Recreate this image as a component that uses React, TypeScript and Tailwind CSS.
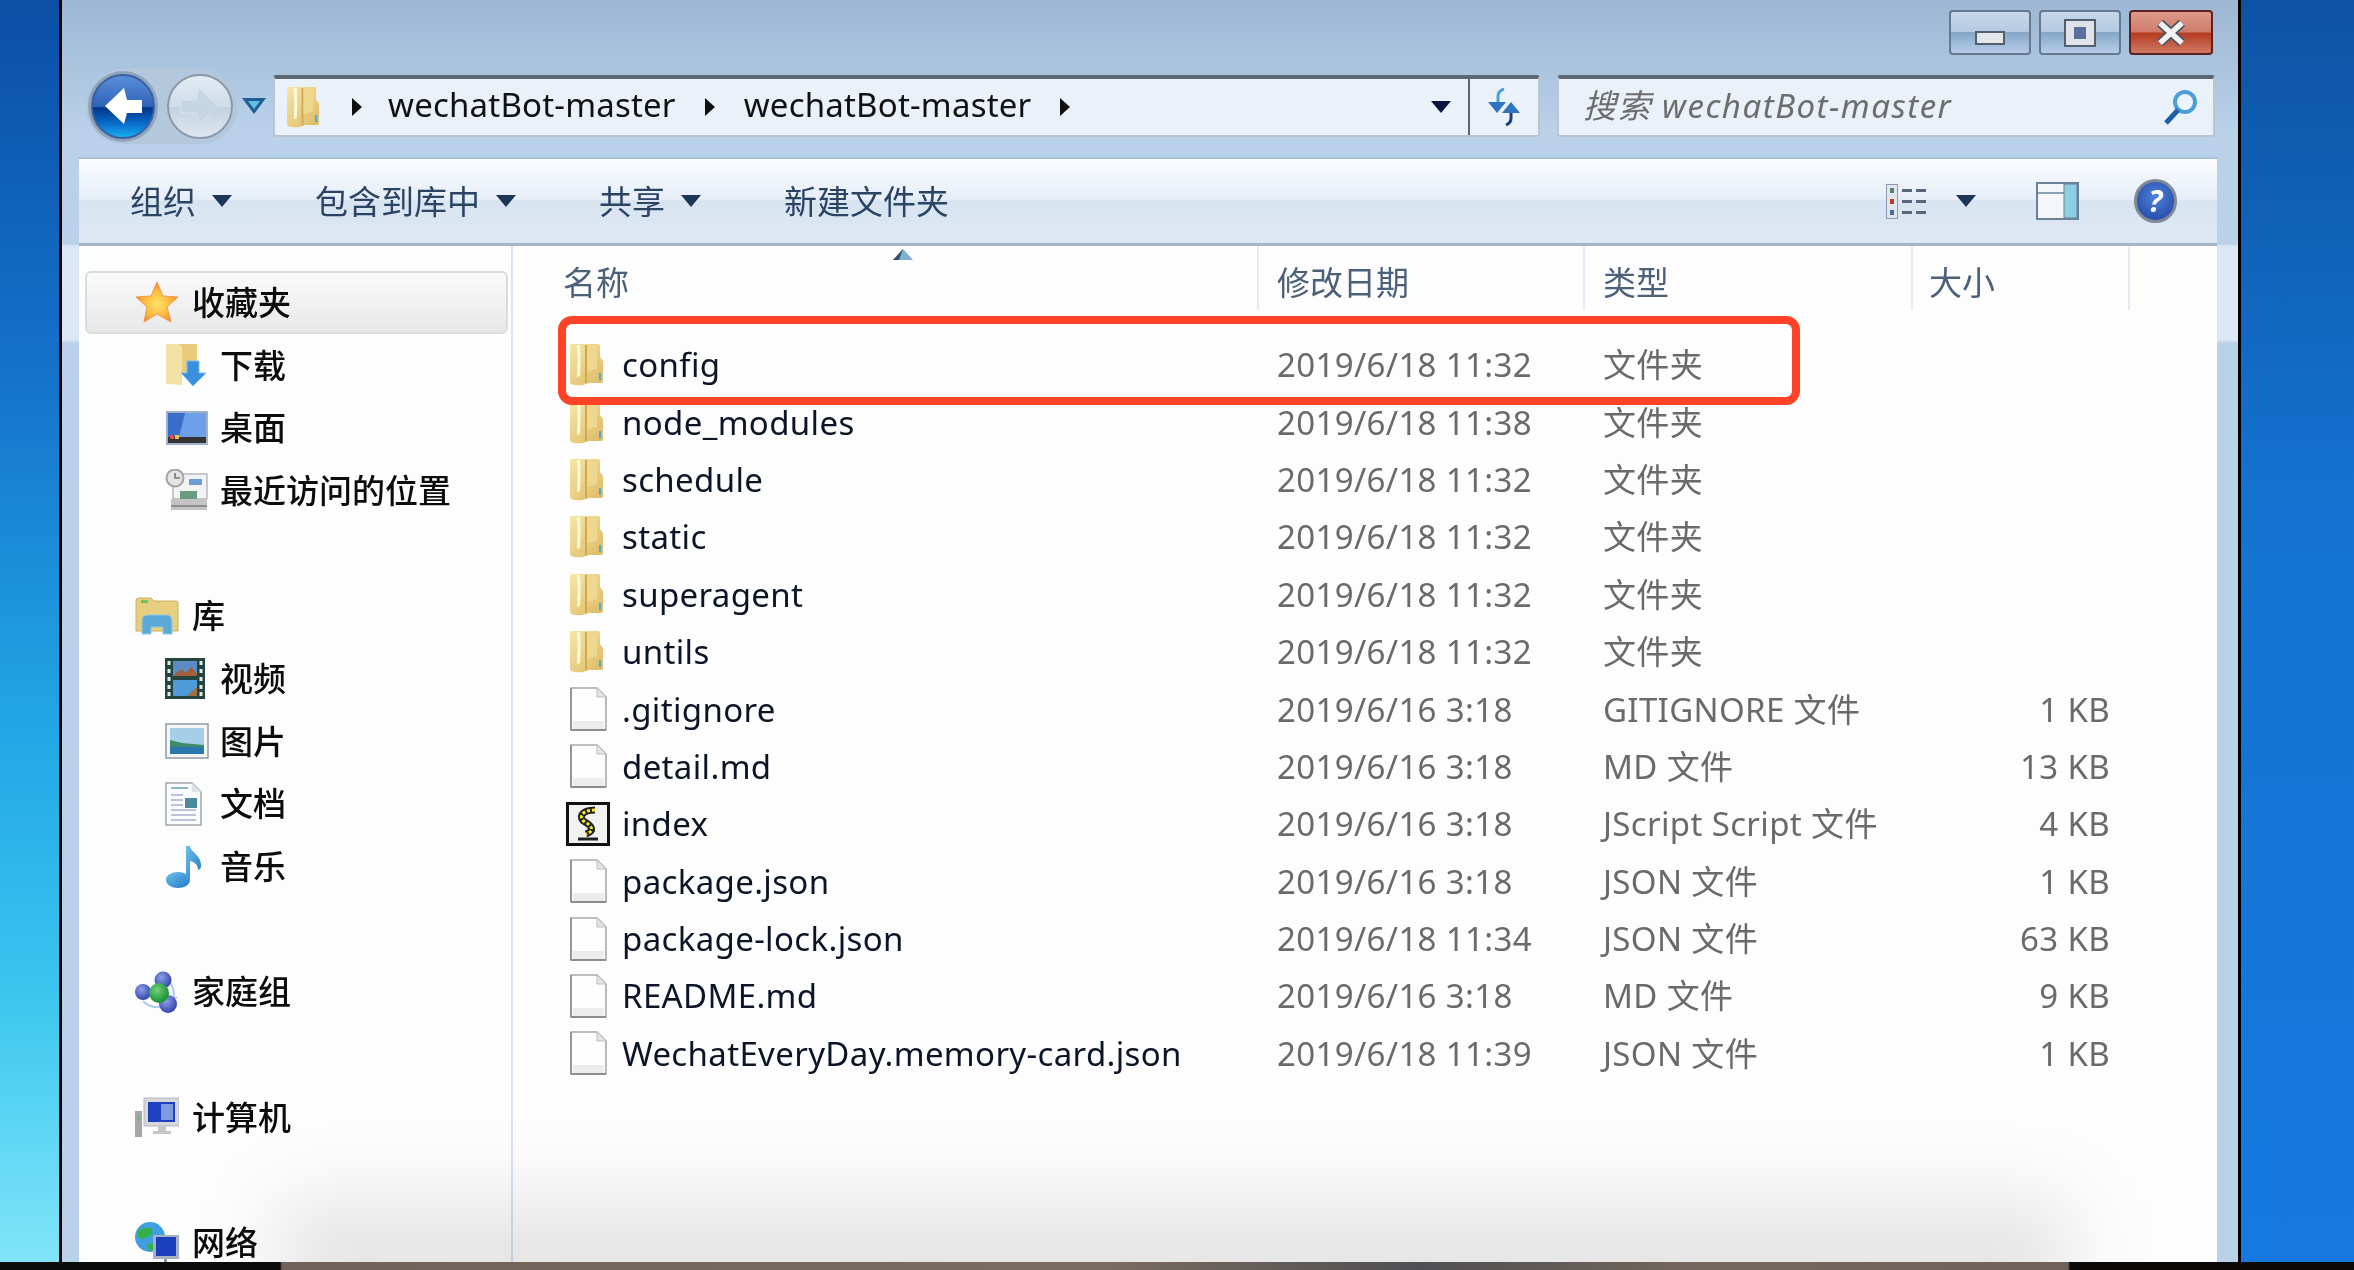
const uiFont = "[font-family:'Noto_Sans','Noto_Sans_CJK_SC',sans-serif]"

// --- small drawn icons ---
const Caret = ({ className = "text-[#1d3557]" }: { className?: string }) => (
    <svg width="20" height="12" viewBox="0 0 20 12" className={className}>
        <path d="M0 0h20L10 12z" fill="currentColor" />
    </svg>
)

const Folder = ({ small = false }: { small?: boolean }) => (
    <svg width={small ? 34 : 35} height={small ? 42 : 43} viewBox="0 0 35 43">
        <defs>
            <linearGradient id="fold" x1="0" x2="1" y1="0" y2="1">
                <stop offset="0" stopColor="#f6e6a6" />
                <stop offset="1" stopColor="#dcb962" />
            </linearGradient>
        </defs>
        <path d="M1 3q0-2 2-2h26q2 0 2 2v11l3 4v20q0 2-2 2H20l-6 2q-8 1-12-1-1-1-1-3z" fill="url(#fold)" />
        <path d="M8 2h3q1 14 0 31l-3 1q1-16 0-32z" fill="#fdf8dc" />
        <path d="M16 2h2v38h-2z" fill="#cfa954" />
        <path d="M18 2h10v24l-10 3z" fill="#eed88f" />
        <path d="M30 30h2v7h-2z" fill="#4fa8d8" />
    </svg>
)

const FileIco = () => (
    <svg width="37" height="44" viewBox="0 0 37 44">
        <path d="M1 1h26l9 9v33H1z" fill="#fdfdfd" stroke="#a9a9a9" strokeWidth="1.6" />
        <path d="M27 1v9h9z" fill="#e4e4e4" stroke="#bdbdbd" />
        <path d="M1 43V1" stroke="#8d8d8d" strokeWidth="1.6" />
        <path d="M1 43h35" stroke="#8d8d8d" strokeWidth="2" />
        <path d="M3 34h31v8H3z" fill="#ececec" />
    </svg>
)

const ScriptIco = () => (
    <svg width="44" height="44" viewBox="0 0 44 44">
        <rect x="1.5" y="1.5" width="41" height="41" fill="#f1f1f1" stroke="#111" strokeWidth="3" />
        <path d="M29 8C15 8 12 16 19 20s10 9 1 12" fill="none" stroke="#222" strokeWidth="7" />
        <path d="M29 8C15 8 12 16 19 20s10 9 1 12" fill="none" stroke="#f2ea26" strokeWidth="3" strokeDasharray="3 2" />
        <path d="M12 37h20" stroke="#222" strokeWidth="3" />
    </svg>
)

const Star = () => (
    <svg width="44" height="42" viewBox="0 0 44 42">
        <defs>
            <radialGradient id="star" cx="0.5" cy="0.55" r="0.55">
                <stop offset="0" stopColor="#ffe46b" />
                <stop offset="0.6" stopColor="#fdb73c" />
                <stop offset="1" stopColor="#ee7d28" />
            </radialGradient>
        </defs>
        <path d="M22 1l6 14 15 1-11 10 4 15-14-8-13 8 3-15L1 16l15-1z" fill="url(#star)" stroke="#f09a4a" strokeWidth="1" />
    </svg>
)

const DownloadIco = () => (
    <svg width="42" height="44" viewBox="0 0 42 44">
        <path d="M1 1h31v30H1z" fill="#e8cc7c" />
        <path d="M1 1h13l3 3v38L1 41z" fill="#f3e2a5" />
        <path d="M22 18h12v12h7L28 43 16 30h6z" fill="#3a90dc" stroke="#80bdec" />
    </svg>
)

const DesktopIco = () => (
    <svg width="44" height="36" viewBox="0 0 44 36">
        <rect x="1" y="1" width="42" height="34" fill="#9fb2c9" />
        <rect x="3" y="3" width="38" height="24" fill="#3a6dc9" />
        <path d="M20 3h21v24H14z" fill="#6ea0e8" />
        <rect x="3" y="27" width="38" height="6" fill="#333" />
        <rect x="5" y="25" width="4" height="4" fill="#e24c3a" />
        <rect x="10" y="25" width="4" height="4" fill="#f0c53a" />
    </svg>
)

const RecentIco = () => (
    <svg width="44" height="42" viewBox="0 0 44 42">
        <rect x="8" y="5" width="34" height="25" fill="#f1f3f5" stroke="#9a9a9a" />
        <rect x="24" y="10" width="13" height="6" fill="#6d9bd8" />
        <rect x="15" y="22" width="17" height="8" fill="#6b9a82" />
        <path d="M6 30h36v11H6z" fill="#c4c4c4" />
        <rect x="6" y="36" width="36" height="2" fill="#8d8d8d" />
        <circle cx="10" cy="9" r="8.5" fill="#e4e4e4" stroke="#a3a3a3" strokeWidth="2" />
        <path d="M10 4v5h5" fill="none" stroke="#777" strokeWidth="1.6" />
    </svg>
)

const LibraryIco = () => (
    <svg width="44" height="38" viewBox="0 0 44 38">
        <path d="M1 4q0-3 3-3h12l3 3h22q2 0 2 2v28H1z" fill="#e8cf80" stroke="#cdae5f" />
        <rect x="6" y="3" width="7" height="3" fill="#6fc260" />
        <path d="M7 37V24q0-6 6-6h18q6 0 6 6v13h-9v-7H16v7z" fill="#5aa9d6" stroke="#8fcbe6" />
    </svg>
)

const VideoIco = () => (
    <svg width="40" height="41" viewBox="0 0 40 41">
        <rect width="40" height="41" fill="#24443f" />
        <rect x="8" y="3" width="24" height="15" fill="#5d8cc4" />
        <path d="M8 18l8-7 5 4 5-6 6 7v2H8z" fill="#a35f3a" />
        <rect x="8" y="22" width="24" height="16" fill="#4f9ad9" />
        <path d="M22 38l10-9v9z" fill="#a0703f" />
        {[3, 11, 19, 27, 34].map(y => (
            <g key={y} fill="#dfe9e6">
                <rect x="2.5" y={y} width="3" height="4" />
                <rect x="34.5" y={y} width="3" height="4" />
            </g>
        ))}
    </svg>
)

const PictureIco = () => (
    <svg width="44" height="36" viewBox="0 0 44 36">
        <rect x="1" y="1" width="42" height="34" fill="#f5f5f5" stroke="#8f9aa6" strokeWidth="1.5" />
        <rect x="5" y="5" width="34" height="26" fill="#a5cfe6" />
        <path d="M5 17l12 3 22 2v9H5z" fill="#3f8a6a" />
        <path d="M5 24h34v7H5z" fill="#2a76ae" />
    </svg>
)

const DocIco = () => (
    <svg width="37" height="44" viewBox="0 0 37 44">
        <path d="M1 1h26l9 9v33H1z" fill="#fbfcfd" stroke="#a0a6ad" strokeWidth="1.5" />
        <path d="M27 1v9h9z" fill="#dfe3e8" />
        <path d="M6 6h17" stroke="#68a0a8" strokeWidth="1.5" />
        <path d="M6 13h12M6 18h12M6 23h12M6 28h25M6 33h25M6 38h25" stroke="#a8aed0" strokeWidth="1.5" />
        <rect x="20" y="16" width="12" height="10" fill="#4c8a9c" />
    </svg>
)

const MusicIco = () => (
    <svg width="38" height="44" viewBox="0 0 38 44">
        <defs>
            <linearGradient id="note" x1="0" x2="1" y1="0" y2="1">
                <stop offset="0" stopColor="#6fc0ea" />
                <stop offset="1" stopColor="#1f78c8" />
            </linearGradient>
        </defs>
        <ellipse cx="13" cy="35" rx="12" ry="8" fill="url(#note)" />
        <path d="M21 35V1h4c1 7 12 9 11 21-1 2-2 3-3 3 0-6-4-8-8-9v19z" fill="url(#note)" />
    </svg>
)

const HomeGroupIco = () => (
    <svg width="44" height="42" viewBox="0 0 44 42">
        <defs>
            <radialGradient id="ball" cx="0.4" cy="0.35" r="0.7">
                <stop offset="0" stopColor="#8f9fe8" />
                <stop offset="1" stopColor="#2b3fa8" />
            </radialGradient>
            <radialGradient id="ballg" cx="0.4" cy="0.35" r="0.7">
                <stop offset="0" stopColor="#6fd27a" />
                <stop offset="1" stopColor="#128a2c" />
            </radialGradient>
        </defs>
        <path d="M8 30q14 14 34-4M28 6q14 8 10 24" fill="none" stroke="#a9cdf0" strokeWidth="2" />
        <circle cx="28" cy="9" r="8.5" fill="url(#ball)" />
        <circle cx="8" cy="21" r="8" fill="url(#ball)" />
        <circle cx="33" cy="33" r="9" fill="url(#ball)" />
        <circle cx="24" cy="22" r="10" fill="url(#ballg)" />
    </svg>
)

const ComputerIco = () => (
    <svg width="44" height="40" viewBox="0 0 44 40">
        <rect x="9" y="1" width="35" height="28" fill="#d5d7da" stroke="#b7babd" />
        <rect x="13" y="5" width="27" height="20" fill="#1d3fc0" />
        <rect x="26" y="7" width="12" height="16" fill="#7f9ae0" />
        <path d="M23 29h8v5h5v3H18v-3h5z" fill="#c4c6c8" />
        <rect x="0" y="14" width="7" height="26" fill="#a4a6a8" />
        <rect x="2" y="20" width="3" height="3" fill="#62c262" />
    </svg>
)

const NetworkIco = () => (
    <svg width="44" height="42" viewBox="0 0 44 42">
        <circle cx="15" cy="15" r="15" fill="#3f9fe0" />
        <path d="M3 9q8-6 14-2 2 6-5 8-4 4-9 0zM12 22q7-2 9 3l-4 4q-5 0-5-7z" fill="#34b04a" />
        <rect x="18" y="13" width="26" height="24" fill="#a7b1bf" />
        <rect x="21" y="15" width="20" height="19" fill="#1c3fbd" />
        <rect x="29" y="37" width="3" height="5" fill="#8a94a2" />
    </svg>
)

// --- data ---
const navRows = [
    { label: "收藏夹", icon: <Star />, head: true, active: true },
    { label: "下载", icon: <DownloadIco /> },
    { label: "桌面", icon: <DesktopIco /> },
    { label: "最近访问的位置", icon: <RecentIco /> },
    null,
    { label: "库", icon: <LibraryIco />, head: true },
    { label: "视频", icon: <VideoIco /> },
    { label: "图片", icon: <PictureIco /> },
    { label: "文档", icon: <DocIco /> },
    { label: "音乐", icon: <MusicIco /> },
    null,
    { label: "家庭组", icon: <HomeGroupIco />, head: true },
    null,
    { label: "计算机", icon: <ComputerIco />, head: true },
    null,
    { label: "网络", icon: <NetworkIco />, head: true },
]

const files = [
    { name: "config", date: "2019/6/18 11:32", type: "文件夹", size: "", kind: "folder" },
    { name: "node_modules", date: "2019/6/18 11:38", type: "文件夹", size: "", kind: "folder" },
    { name: "schedule", date: "2019/6/18 11:32", type: "文件夹", size: "", kind: "folder" },
    { name: "static", date: "2019/6/18 11:32", type: "文件夹", size: "", kind: "folder" },
    { name: "superagent", date: "2019/6/18 11:32", type: "文件夹", size: "", kind: "folder" },
    { name: "untils", date: "2019/6/18 11:32", type: "文件夹", size: "", kind: "folder" },
    { name: ".gitignore", date: "2019/6/16 3:18", type: "GITIGNORE 文件", size: "1 KB", kind: "file" },
    { name: "detail.md", date: "2019/6/16 3:18", type: "MD 文件", size: "13 KB", kind: "file" },
    { name: "index", date: "2019/6/16 3:18", type: "JScript Script 文件", size: "4 KB", kind: "script" },
    { name: "package.json", date: "2019/6/16 3:18", type: "JSON 文件", size: "1 KB", kind: "file" },
    { name: "package-lock.json", date: "2019/6/18 11:34", type: "JSON 文件", size: "63 KB", kind: "file" },
    { name: "README.md", date: "2019/6/16 3:18", type: "MD 文件", size: "9 KB", kind: "file" },
    { name: "WechatEveryDay.memory-card.json", date: "2019/6/18 11:39", type: "JSON 文件", size: "1 KB", kind: "file" },
]

const columns = "grid grid-cols-[746px_326px_328px_217px_1fr]"

const TitleBar = () => (
    <div className="flex h-[75px] shrink-0 justify-end gap-[8px] pt-[10px] pr-[25px]">
        <div className="flex h-[45px] w-[82px] items-end justify-center rounded-[4px] border-2 border-[#66798f] bg-[linear-gradient(to_bottom,#c6d8ea_0%,#b4cae2_48%,#86a6c8_50%,#b5cee8_100%)] pb-[8px]">
            <div className="h-[14px] w-[30px] border-2 border-[#555e6c] bg-[#e4e7ea]" />
        </div>
        <div className="flex h-[45px] w-[82px] items-center justify-center rounded-[4px] border-2 border-[#66798f] bg-[linear-gradient(to_bottom,#c6d8ea_0%,#b4cae2_48%,#86a6c8_50%,#b5cee8_100%)]">
            <div className="h-[24px] w-[28px] border-[6px] border-x-[8px] border-[#dfe3e8] bg-[#5a6f9a] outline-2 outline-[#555e6c]" />
        </div>
        <div className="flex h-[45px] w-[84px] items-center justify-center rounded-[4px] border-2 border-[#5c1f22] bg-[linear-gradient(to_bottom,#dd9a8b_0%,#cf7c6a_48%,#b53b20_52%,#cf7a66_100%)]">
            <svg width="32" height="26" viewBox="0 0 32 26">
                <path d="M5 3l22 20M27 3L5 23" stroke="#4c5566" strokeWidth="9" />
                <path d="M5 3l22 20M27 3L5 23" stroke="#f3f3f3" strokeWidth="5.5" />
            </svg>
        </div>
    </div>
)

const NavButtons = () => (
    <div className="flex items-center gap-[12px] rounded-full bg-[#b3c7dd] shadow-[0_0_0_5px_#b3c7dd]">
        <div className="flex h-[65px] w-[64px] items-center justify-center rounded-full border-2 border-[#3c5f9e] bg-[linear-gradient(to_bottom,#5c8fd8_0%,#2d62b8_50%,#04348a_52%,#0a70cc_80%,#18b0f5_100%)] shadow-[0_0_0_3px_#8fa4bd]">
            <svg width="42" height="40" viewBox="0 0 42 40">
                <path d="M22 2L3 20l19 18 3-11h15V14H25z" fill="#fff" />
            </svg>
        </div>
        <div className="flex h-[65px] w-[66px] items-center justify-center rounded-full border-2 border-[#8c98a6] bg-[linear-gradient(to_bottom,#e2ebf4_0%,#cfdce9_50%,#c4d3e2_52%,#dce6f0_100%)]">
            <svg width="42" height="40" viewBox="0 0 42 40">
                <path d="M20 2l19 18-19 18-3-11H2V14h15z" fill="#c7d6e4" stroke="#d8e4ee" />
            </svg>
        </div>
    </div>
)

const AddressBar = () => (
    <div className="flex h-[62px] w-[1267px] items-center rounded-[3px] border-2 border-t-[4px] border-[#b9c5d2] border-t-[#5d6673] bg-[#eaf1f9] pl-[11px] text-[33px] leading-none tracking-[0.2px] text-[#111]">
        <Folder small />
        <svg width="10" height="18" viewBox="0 0 10 18" className="ml-[32px]"><path d="M0 0l10 9-10 9z" fill="#111" /></svg>
        <span className="ml-[26px] pb-[6px]">wechatBot-master</span>
        <svg width="10" height="18" viewBox="0 0 10 18" className="ml-[29px]"><path d="M0 0l10 9-10 9z" fill="#111" /></svg>
        <span className="ml-[29px] pb-[6px]">wechatBot-master</span>
        <svg width="10" height="18" viewBox="0 0 10 18" className="ml-[29px]"><path d="M0 0l10 9-10 9z" fill="#111" /></svg>
        <div className="ml-auto flex h-full items-center">
            <Caret className="text-[#0a1440]" />
            <div className="ml-[17px] h-full w-[2px] bg-[#5d6673]" />
            <div className="flex w-[68px] justify-center">
                <svg width="38" height="38" viewBox="0 0 38 38">
                    <path d="M13 22V8q0-5 6-7" fill="none" stroke="#45a3d8" strokeWidth="3" />
                    <path d="M3 14h18l-9 11z" fill="#2f74c0" />
                    <path d="M26 16v14q0 5-5 7" fill="none" stroke="#1d3f78" strokeWidth="3" />
                    <path d="M17 25h18l-9-11z" fill="#2f74c0" />
                </svg>
            </div>
        </div>
    </div>
)

const SearchBox = () => (
    <div className="flex h-[62px] flex-1 items-center rounded-[3px] border-2 border-t-[4px] border-[#b9c5d2] border-t-[#5d6673] bg-[#eaf1f9] pr-[14px] pl-[24px]">
        <span className="pb-[4px] text-[33px] leading-none tracking-[1.5px] text-[#6d6d6d] italic">搜索 wechatBot-master</span>
        <svg width="36" height="36" viewBox="0 0 36 36" className="ml-auto">
            <circle cx="22" cy="13" r="10" fill="#eaf4fb" stroke="#4b9fd6" strokeWidth="4" />
            <path d="M15 21L3 34" stroke="#1f5ea8" strokeWidth="5" />
        </svg>
    </div>
)

const Toolbar = () => (
    <div className="mr-[21px] ml-[17px] flex h-[89px] shrink-0 items-center border-t-2 border-b-[3px] border-t-[#a9c0d8] border-b-[#a6b4c6] bg-[linear-gradient(to_bottom,#fafcff_0%,#e6eef8_48%,#d9e4f1_50%,#dde8f4_100%)] pr-[40px] pl-[51px] text-[33px] leading-none text-[#2c4464]">
        <div className="flex gap-[83px]">
            {["组织", "包含到库中", "共享"].map(t => (
                <div key={t} className="flex items-center gap-[16px]">
                    <span>{t}</span>
                    <Caret />
                </div>
            ))}
            <span>新建文件夹</span>
        </div>
        <div className="ml-auto flex items-center">
            <svg width="41" height="35" viewBox="0 0 41 35">
                <rect x="0.5" y="0.5" width="11" height="34" fill="#dfe6ee" stroke="#8b9ab0" />
                <rect x="4" y="4" width="4" height="5" fill="#5b7f6a" />
                <rect x="4" y="15" width="4" height="5" fill="#c0392b" />
                <rect x="4" y="26" width="4" height="5" fill="#4a6a9a" />
                <path d="M16 6.5h10M30 6.5h10M16 17.5h10M30 17.5h10M16 28.5h10M30 28.5h10" stroke="#59677a" strokeWidth="3" />
            </svg>
            <Caret className="ml-[29px] text-[#1d3557]" />
            <svg width="43" height="38" viewBox="0 0 43 38" className="ml-[60px]">
                <rect x="1" y="1" width="41" height="36" fill="#f4f6f9" stroke="#6c8098" strokeWidth="2" />
                <path d="M2 11h26" stroke="#8ba0b6" strokeWidth="2" />
                <rect x="28" y="2" width="13" height="34" fill="#8ad0e2" stroke="#6c8098" />
            </svg>
            <div className="ml-[55px] flex h-[44px] w-[43px] items-center justify-center rounded-full border-[3px] border-[#808a96] bg-[radial-gradient(circle_at_50%_40%,#4e84dc,#1c3f9c)]">
                <span className="text-[30px] leading-none font-bold text-white italic">?</span>
            </div>
        </div>
    </div>
)

const Sidebar = () => (
    <div className="w-[434px] shrink-0 border-r-2 border-[#d9e4f2] pt-[25px]">
        {navRows.map((row, i) =>
            row ? (
                <div
                    key={row.label}
                    className={`mr-[3px] ml-[6px] flex h-[62.7px] items-center rounded-[6px] text-[33px] leading-none font-medium text-[#0c0c0c] ${row.active ? "border-2 border-[#dcdcdc] bg-[linear-gradient(to_bottom,#fafafa,#e8e8e8)]" : ""} ${row.head ? "pl-[50px]" : "pl-[80px]"}`}
                >
                    <div className={row.active ? "-ml-[2px] w-[57px]" : "w-[57px]"}>{row.icon}</div>
                    <span className={row.head ? "" : "-ml-[2px]"}>{row.label}</span>
                </div>
            ) : (
                <div key={i} className="h-[62.7px]" />
            ),
        )}
    </div>
)

const FileList = () => (
    <div className="flex-1">
        <div className={`${columns} relative h-[64px] text-[33px] leading-none text-[#4c607a]`}>
            <div className="flex items-center border-r-2 border-[#e3ebf5] pt-[8px] pl-[50px]">名称</div>
            <div className="flex items-center border-r-2 border-[#e3ebf5] pt-[8px] pl-[18px]">修改日期</div>
            <div className="flex items-center border-r-2 border-[#e3ebf5] pt-[8px] pl-[18px]">类型</div>
            <div className="flex items-center border-r-2 border-[#e3ebf5] pt-[8px] pl-[16px]">大小</div>
            <svg width="20" height="11" viewBox="0 0 20 11" className="absolute top-[3px] left-[380px]">
                <path d="M10 0l10 11H0z" fill="#7fb0d0" />
                <path d="M10 0L0 11h6z" fill="#33506e" />
            </svg>
        </div>
        <div className="pt-[26px]">
            {files.map(f => (
                <div key={f.name} className={`${columns} h-[57.4px] items-center text-[33px] leading-none tracking-[0.35px] text-[#6a6a6a]`}>
                    <div className="flex items-center text-[#0b1526]">
                        <div className={`flex w-[109px] justify-end ${f.kind === "folder" ? "pr-[18px]" : f.kind === "script" ? "pr-[12px]" : "pr-[15px]"}`}>
                            {f.kind === "folder" ? <Folder /> : f.kind === "script" ? <ScriptIco /> : <FileIco />}
                        </div>
                        <span>{f.name}</span>
                    </div>
                    <div className="pl-[18px]">{f.date}</div>
                    <div className="pl-[18px]">{f.type}</div>
                    <div className="pr-[20px] text-right">{f.size}</div>
                    <div />
                </div>
            ))}
        </div>
    </div>
)

const App = () => {
    return (
        <div className={`flex h-[1270px] w-[2354px] flex-col overflow-hidden bg-black blur-[0.7px] ${uiFont}`}>
            <div className="flex h-[1262px] shrink-0">
                <div className="w-[59px] bg-[linear-gradient(to_bottom,#0b4ea6_0%,#1473cc_30%,#22a7e6_58%,#38c5ee_78%,#80e5f9_100%)]" />
                <div className="flex w-[2182px] flex-col border-x-[3px] border-black bg-[linear-gradient(to_bottom,#9db7d3_0,#b9d1e9_130px,#b9d1e9_244px,#dbe7f4_246px,#dbe7f4_340px,#b9d1e9_343px,#b9d1e9_100%)]">
                    <TitleBar />
                    <div className="flex h-[62px] shrink-0 items-center pr-[23px] pl-[29px]">
                        <NavButtons />
                        <svg width="24" height="16" viewBox="0 0 24 16" className="ml-[9px]">
                            <path d="M0 0h24L12 16z" fill="#1f5f95" />
                            <path d="M6 3h12l-6 8z" fill="#62bfe0" />
                        </svg>
                        <div className="ml-[7px] flex flex-1 items-center gap-[17px]">
                            <AddressBar />
                            <SearchBox />
                        </div>
                    </div>
                    <div className="h-[20px] shrink-0" />
                    <Toolbar />
                    <div className="relative mr-[21px] ml-[17px] flex flex-1 overflow-hidden bg-[#fdfdfd]">
                        <Sidebar />
                        <FileList />
                        <div className="pointer-events-none absolute right-[148px] -bottom-[50px] left-[200px] h-[110px] bg-black/10 blur-[40px]" />
                        <div className="pointer-events-none absolute top-[70px] left-[479px] h-[89px] w-[1242px] rounded-[14px] border-8 border-[#ff4326]" />
                    </div>
                </div>
                <div className="flex-1 bg-[linear-gradient(to_bottom,#0d53a4_0%,#1473d0_40%,#1679e0_100%)]" />
            </div>
            <div className="h-2 shrink-0 bg-[linear-gradient(to_right,#0b0b0b_0,#0b0b0b_280px,#6f625a_282px,#7a6c62_1100px,#4f4f52_1420px,#74675e_1700px,#6f625a_2068px,#0b0a08_2070px,#0b0a08_100%)]" />
        </div>
    )
}

export default App
